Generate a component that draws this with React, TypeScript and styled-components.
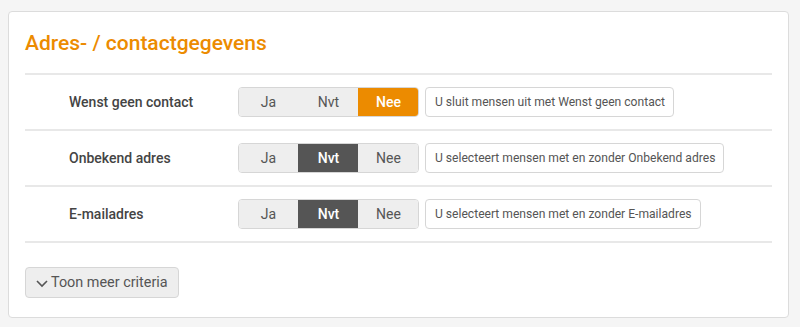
import React, { FC } from 'react';
import styled, { createGlobalStyle } from 'styled-components';

const GlobalStyle = createGlobalStyle`
  html, body {
    margin: 0;
    padding: 0;
    background: #f5f5f5;
    font-family: Roboto, "Liberation Sans", Arial, sans-serif;
  }
`;

const Page = styled.div`
  padding: 11px 11px 9px 8px;
`;

const Card = styled.div`
  background: #fff;
  border: 1px solid #dcdcdc;
  border-radius: 4px;
  padding: 16px 16px 20px 16px;
  box-sizing: border-box;
  height: 307px;
`;

const Title = styled.h2`
  margin: 0;
  height: 45px;
  line-height: 31px;
  font-size: 21px;
  font-weight: 500;
  color: #ec8b00;
  border-bottom: 2px solid #e8e8e8;
`;

const Row = styled.div`
  display: flex;
  align-items: center;
  height: 54px;
  border-bottom: 2px solid #e8e8e8;
`;

const Label = styled.div`
  width: 169px;
  padding-left: 44px;
  font-size: 14px;
  font-weight: 500;
  color: #444;
`;

const Segments = styled.div`
  display: flex;
  border: 1px solid #d6d6d6;
  border-radius: 4px;
  overflow: hidden;
  height: 28px;
`;

type SegProps = { $active?: 'orange' | 'dark' };

const Segment = styled.div<SegProps>`
  width: 59px;
  display: flex;
  align-items: center;
  justify-content: center;
  font-size: 14px;
  color: ${p => (p.$active ? '#fff' : '#555')};
  font-weight: ${p => (p.$active ? 500 : 400)};
  background: ${p =>
    p.$active === 'orange' ? '#ec8b00' : p.$active === 'dark' ? '#555' : '#eeeeee'};
  & + & {
    border-left: 1px solid ${p => (p.$active ? 'transparent' : '#d6d6d6')};
  }
`;

const Hint = styled.div`
  margin-left: 6px;
  height: 28px;
  display: flex;
  align-items: center;
  padding: 0 8px 0 9px;
  border: 1px solid #d6d6d6;
  border-radius: 4px;
  font-size: 12.1px;
  color: #555;
`;

const MoreButton = styled.button`
  margin-top: 24px;
  display: inline-flex;
  align-items: center;
  gap: 2px;
  height: 31px;
  padding: 0 10px 0 9px;
  background: #eeeeee;
  border: 1px solid #d6d6d6;
  border-radius: 4px;
  font-family: inherit;
  font-size: 14.4px;
  color: #555;
`;

const rows: { label: string; value: 'Ja' | 'Nvt' | 'Nee'; hint: string }[] = [
  { label: 'Wenst geen contact', value: 'Nee', hint: 'U sluit mensen uit met Wenst geen contact' },
  { label: 'Onbekend adres', value: 'Nvt', hint: 'U selecteert mensen met en zonder Onbekend adres' },
  { label: 'E-mailadres', value: 'Nvt', hint: 'U selecteert mensen met en zonder E-mailadres' },
];

const App: FC = () => {
  return (
    <Page>
      <GlobalStyle />
      <Card>
        <Title>Adres- / contactgegevens</Title>
        {rows.map(r => (
          <Row key={r.label}>
            <Label>{r.label}</Label>
            <Segments>
              {(['Ja', 'Nvt', 'Nee'] as const).map(opt => (
                <Segment
                  key={opt}
                  $active={r.value === opt ? (opt === 'Nee' ? 'orange' : 'dark') : undefined}
                >
                  {opt}
                </Segment>
              ))}
            </Segments>
            <Hint>{r.hint}</Hint>
          </Row>
        ))}
        <MoreButton>
          <svg width="14" height="14" viewBox="0 0 14 14">
            <path d="M2 5 L7 10 L12 5" fill="none" stroke="#555" strokeWidth="1.6" />
          </svg>
          Toon meer criteria
        </MoreButton>
      </Card>
    </Page>
  );
};

export default App;
